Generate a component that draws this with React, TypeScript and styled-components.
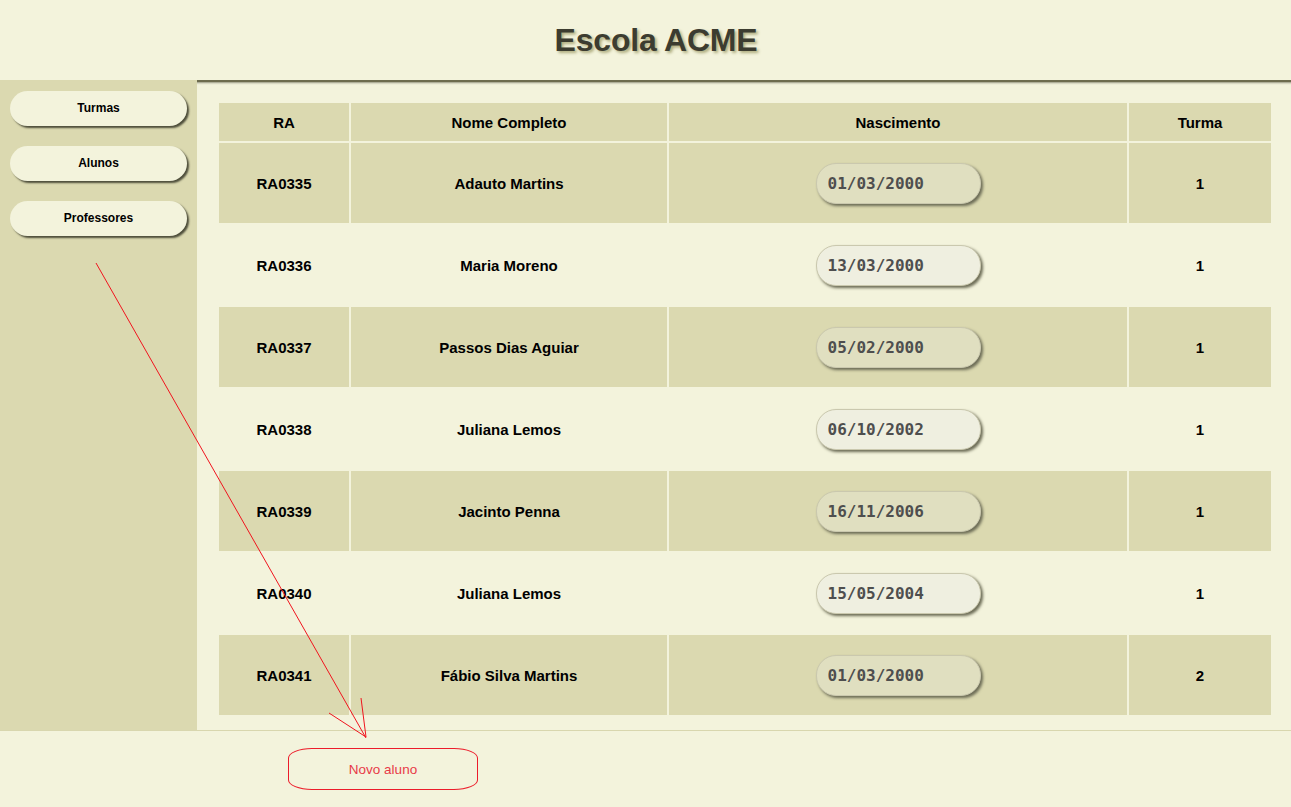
import React from "react";
import styled, { createGlobalStyle } from "styled-components";

const GlobalStyle = createGlobalStyle`
  html, body {
    margin: 0;
    padding: 0;
    background: #f3f3dc;
    font-family: "Liberation Sans", Arial, sans-serif;
  }
  * { box-sizing: border-box; }
`;

const Page = styled.div`
  position: relative;
  width: 100%;
  min-height: 100vh;
  display: flex;
  flex-direction: column;
  background: #f3f3dc;
`;

const Header = styled.header`
  height: 80px;
  display: flex;
  align-items: center;
  justify-content: center;
  padding-left: 21px;
`;

const Title = styled.h1`
  margin: 0;
  font-size: 32px;
  font-weight: bold;
  color: #3c3c30;
  letter-spacing: -0.2px;
  text-shadow: 2px 2px 3px #aeac7e;
`;

const Body = styled.div`
  display: flex;
  align-items: stretch;
`;

const Sidebar = styled.nav`
  width: 197px;
  flex: 0 0 197px;
  background: #dbd9b0;
  padding: 11px 10px;
  display: flex;
  flex-direction: column;
  gap: 20px;
`;

const NavButton = styled.button`
  width: 177px;
  height: 35px;
  border: none;
  border-radius: 18px;
  background: #f3f3dc;
  box-shadow: 2px 2px 2px #4d4d3a;
  font-family: "Liberation Sans", Arial, sans-serif;
  font-size: 12px;
  font-weight: bold;
  color: #000;
  padding: 0 0 1px;
  cursor: pointer;
`;

const Main = styled.main`
  flex: 1;
  border-top: 2px solid #6d6c4e;
  box-shadow: inset 0 3px 2px -2px rgba(60, 60, 40, 0.5);
  padding: 19px 18px 13px 20px;
`;

const Table = styled.table`
  width: 100%;
  border-collapse: separate;
  border-spacing: 2px;
  table-layout: fixed;
`;

const HeadCell = styled.th<{ $w?: number }>`
  height: 38px;
  background: #dbd9b0;
  font-size: 15px;
  font-weight: bold;
  color: #000;
  text-align: center;
  padding: 0;
  width: ${(p) => (p.$w ? `${p.$w}px` : "auto")};
`;

const Row = styled.tr<{ $odd: boolean }>`
  background: ${(p) => (p.$odd ? "#dbd9b0" : "transparent")};
`;

const Cell = styled.td`
  height: 80px;
  font-size: 15px;
  font-weight: bold;
  color: #000;
  text-align: center;
  padding: 0;
`;

const DateInput = styled.input<{ $odd: boolean }>`
  width: 165px;
  height: 41px;
  border-radius: 20px;
  border: 1px solid #cac8ae;
  background: ${(p) => (p.$odd ? "#e0dfc0" : "#efefe0")};
  box-shadow: 2px 2px 3px #6b6b55;
  font-family: "DejaVu Sans Mono", "Liberation Mono", monospace;
  font-weight: bold;
  font-size: 16px;
  color: #4e4e4e;
  padding: 0 0 0 11px;
  outline: none;
  display: block;
  margin: 0 auto;
`;

const Footer = styled.footer`
  flex: 1;
  border-top: 1px solid #d8d6ae;
  padding: 17px 0 17px 288px;
`;

const NewButton = styled.button`
  width: 190px;
  height: 42px;
  border: 1px solid #ec1c2a;
  border-radius: 24px / 10px;
  background: transparent;
  font-family: "Liberation Sans", Arial, sans-serif;
  font-size: 13.5px;
  color: #e83a48;
  padding: 0;
  cursor: pointer;
`;

const Annotation = styled.svg`
  position: absolute;
  left: 0;
  top: 0;
  pointer-events: none;
`;

const students = [
  { ra: "RA0335", nome: "Adauto Martins", nasc: "01/03/2000", turma: "1" },
  { ra: "RA0336", nome: "Maria Moreno", nasc: "13/03/2000", turma: "1" },
  { ra: "RA0337", nome: "Passos Dias Aguiar", nasc: "05/02/2000", turma: "1" },
  { ra: "RA0338", nome: "Juliana Lemos", nasc: "06/10/2002", turma: "1" },
  { ra: "RA0339", nome: "Jacinto Penna", nasc: "16/11/2006", turma: "1" },
  { ra: "RA0340", nome: "Juliana Lemos", nasc: "15/05/2004", turma: "1" },
  { ra: "RA0341", nome: "Fábio Silva Martins", nasc: "01/03/2000", turma: "2" },
];

export default function App() {
  return (
    <>
      <GlobalStyle />
      <Page>
        <Header>
          <Title>Escola ACME</Title>
        </Header>
        <Body>
          <Sidebar>
            <NavButton>Turmas</NavButton>
            <NavButton>Alunos</NavButton>
            <NavButton>Professores</NavButton>
          </Sidebar>
          <Main>
            <Table>
              <thead>
                <tr>
                  <HeadCell $w={130}>RA</HeadCell>
                  <HeadCell $w={316}>Nome Completo</HeadCell>
                  <HeadCell $w={458}>Nascimento</HeadCell>
                  <HeadCell>Turma</HeadCell>
                </tr>
              </thead>
              <tbody>
                {students.map((s, i) => (
                  <Row key={s.ra} $odd={i % 2 === 0}>
                    <Cell>{s.ra}</Cell>
                    <Cell>{s.nome}</Cell>
                    <Cell>
                      <DateInput $odd={i % 2 === 0} readOnly value={s.nasc} />
                    </Cell>
                    <Cell>{s.turma}</Cell>
                  </Row>
                ))}
              </tbody>
            </Table>
          </Main>
        </Body>
        <Footer>
          <NewButton>Novo aluno</NewButton>
        </Footer>
        <Annotation width="1291" height="807" viewBox="0 0 1291 807">
          <g stroke="#f0141e" strokeWidth="1" fill="none">
            <line x1="96" y1="263" x2="366" y2="738" />
            <line x1="329" y1="713" x2="366" y2="737" />
            <line x1="361" y1="698" x2="366" y2="737" />
          </g>
        </Annotation>
      </Page>
    </>
  );
}
